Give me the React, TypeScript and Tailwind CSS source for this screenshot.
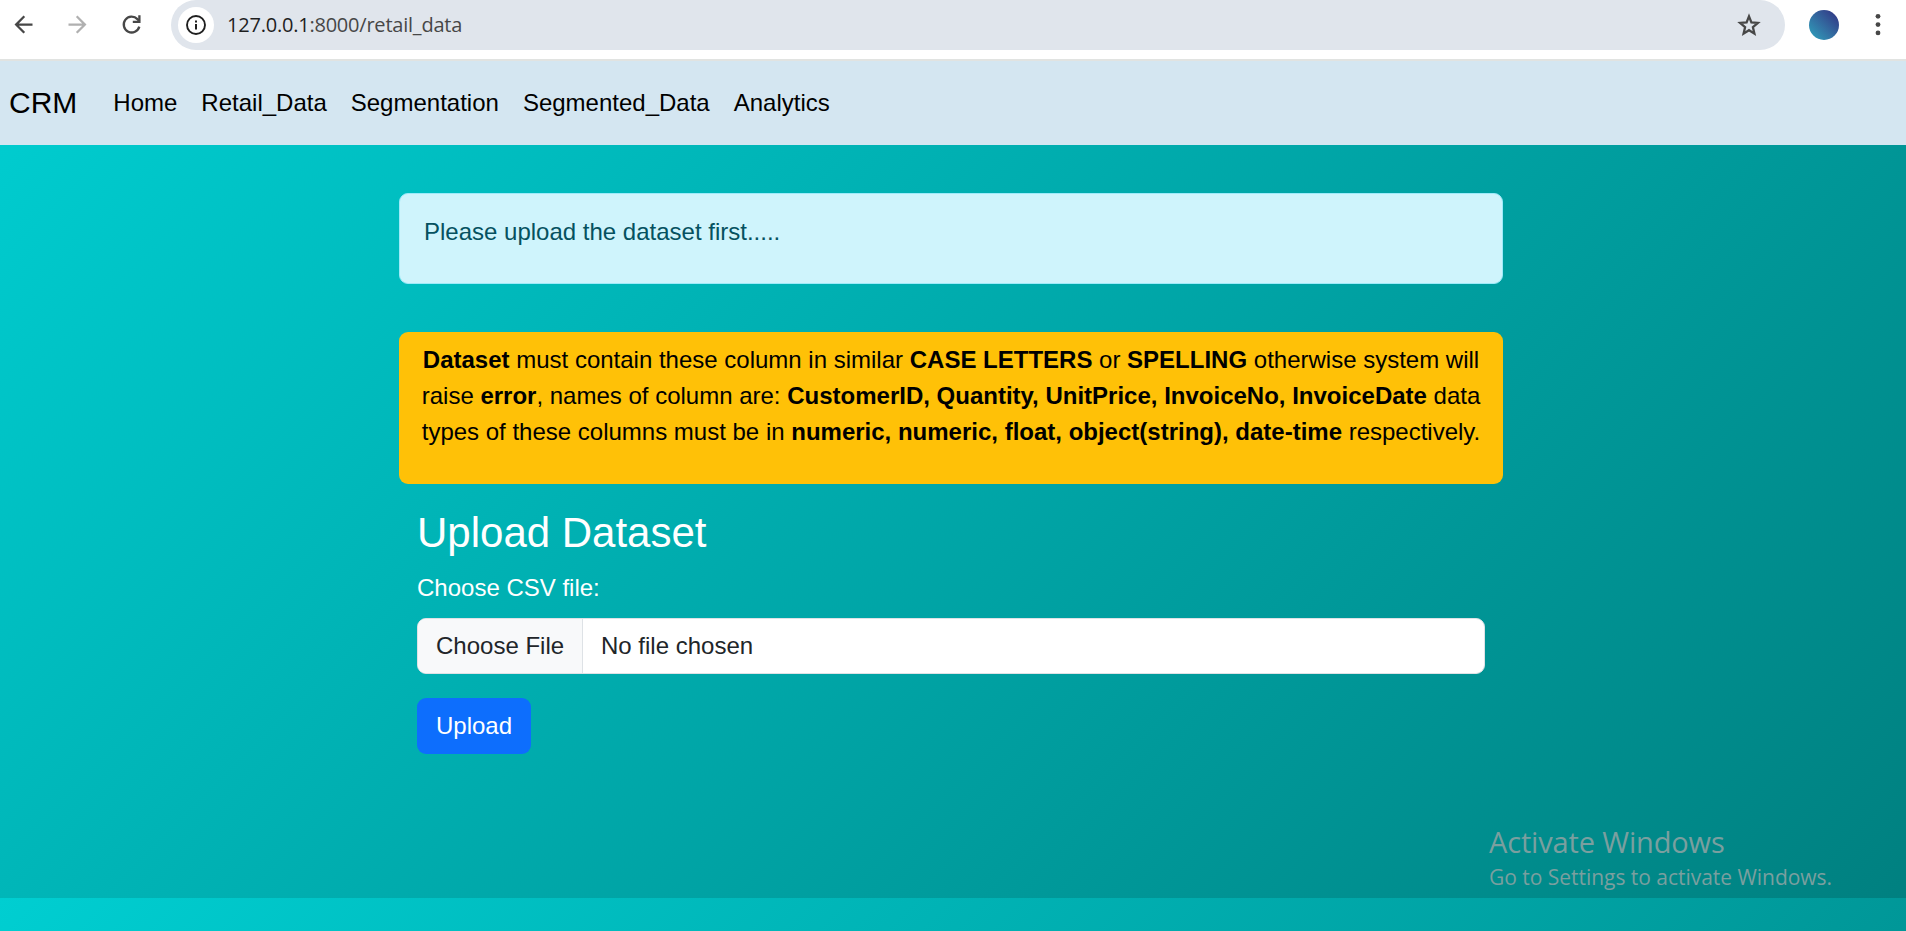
import React from "react";
import { MdArrowBack, MdArrowForward } from "react-icons/md";

const links = ["Home", "Retail_Data", "Segmentation", "Segmented_Data", "Analytics"];

function BrowserBar() {
  return (
    <div className="flex h-[61px] shrink-0 items-start border-b-2 border-[#e1e3e1] bg-white font-['Open_Sans','Noto_Sans',sans-serif]">
      <div className="flex h-[49px] w-[171px] shrink-0 items-center pl-[10px] text-[#474747]">
        <MdArrowBack size={27} />
        <MdArrowForward size={27} className="ml-[27px] text-[#b0b0b0]" />
        <svg className="ml-[27px]" width="27" height="27" viewBox="0 0 27 27" fill="none" stroke="currentColor" strokeWidth="2.3">
          <path d="M21.3 15.6a7.9 7.9 0 1 1-1.9-7.5l2 2.4" />
          <path d="M21.4 4.3v6.6h-6.6" />
        </svg>
      </div>
      <div className="flex h-[50px] w-[1614px] shrink-0 items-center rounded-full bg-[#e0e5ec] pl-[7px]">
        <div className="mb-px flex size-9 items-center justify-center rounded-full bg-white">
          <svg width="22" height="22" viewBox="0 0 22 22" fill="none" stroke="#1f1f1f">
            <circle cx="11" cy="11" r="9" strokeWidth="1.9" />
            <path d="M11 10v5.5" strokeWidth="2" />
            <path d="M11 6.4v2" strokeWidth="2" />
          </svg>
        </div>
        <div className="mb-px ml-[13px] text-[20px] tracking-[-0.22px] text-[#474747]">
          <span className="text-[#1f1f1f]">127.0.0.1</span>:8000/retail_data
        </div>
        <svg className="mb-px ml-auto mr-[23px]" width="26" height="26" viewBox="0 0 26 26" fill="none" stroke="#474747" strokeWidth="2.3">
          <path d="M13 4.4l2.4 6 6.5.5-5 4.3 1.5 6.4-5.4-3.4-5.4 3.4 1.5-6.4-5-4.3 6.5-.5z" />
        </svg>
      </div>
      <div className="ml-6 mt-[10px] size-[30px] rounded-full bg-linear-to-tr from-[#2aa5bd] to-[#2f2d80]" />
      <svg className="ml-[34px] mt-3" width="10" height="26" viewBox="0 0 10 26" fill="#474747">
        <circle cx="5" cy="4.3" r="2.4" />
        <circle cx="5" cy="12.6" r="2.4" />
        <circle cx="5" cy="20.9" r="2.4" />
      </svg>
    </div>
  );
}

function Navbar() {
  return (
    <nav className="flex h-[84px] shrink-0 items-center bg-[#d4e6f1] pl-[9px] text-black">
      <span className="mb-0.5 mr-6 text-[30px] leading-[45px]">CRM</span>
      {links.map((l) => (
        <a key={l} className="px-3 leading-9">{l}</a>
      ))}
    </nav>
  );
}

export default function App() {
  return (
    <div className="relative flex h-[931px] w-full flex-col overflow-hidden">
      <BrowserBar />
      <div className="flex grow flex-col bg-[linear-gradient(135deg,#00ced1,#008080)] bg-[length:100%_837px] font-['Liberation_Sans',Arial,sans-serif] text-[24px] leading-9">
        <Navbar />
        <main className="ml-[399px] w-[1104px] pt-12">
          <div className="h-[91px] rounded-[9px] border border-[#9eeaf9] bg-[#cff4fc] pl-6 pt-5 text-[#055160]">
            Please upload the dataset first.....
          </div>
          <div className="mt-12 h-[152px] rounded-[9px] bg-[#ffc107] pt-[10px] text-center text-black">
            <p className="whitespace-nowrap">
              <b>Dataset</b> must contain these column in similar <b>CASE LETTERS</b> or <b>SPELLING</b> otherwise system will
              <br />
              raise <b>error</b>, names of column are: <b>CustomerID, Quantity, UnitPrice, InvoiceNo, InvoiceDate</b> data
              <br />
              types of these columns must be in <b>numeric, numeric, float, object(string), date-time</b> respectively.
            </p>
          </div>
          <form className="flex flex-col px-[18px] pt-6 text-white">
            <h2 className="text-[42px] leading-[50px]">Upload Dataset</h2>
            <label className="mt-3">Choose CSV file:</label>
            <div className="mt-3 flex h-14 overflow-hidden rounded-[9px] border border-[#dee2e6] bg-white text-[#212529]">
              <span className="w-[165px] border-r border-[#dee2e6] bg-[#f8f9fa] pl-[18px] leading-[54px]">Choose File</span>
              <span className="pl-[18px] leading-[54px]">No file chosen</span>
            </div>
            <button type="button" className="mt-6 h-14 w-[114px] rounded-[9px] bg-[#0d6efd] text-white">
              Upload
            </button>
          </form>
        </main>
      </div>
      <div className="absolute left-[1489px] top-[822px] whitespace-nowrap font-['Open_Sans','Noto_Sans',sans-serif] text-[#7a9f9f]">
        <div className="text-[29px] leading-[40px] tracking-[-0.15px]">Activate Windows</div>
        <div className="text-[21px] leading-[30px] tracking-[-0.03px]">Go to Settings to activate Windows.</div>
      </div>
    </div>
  );
}
